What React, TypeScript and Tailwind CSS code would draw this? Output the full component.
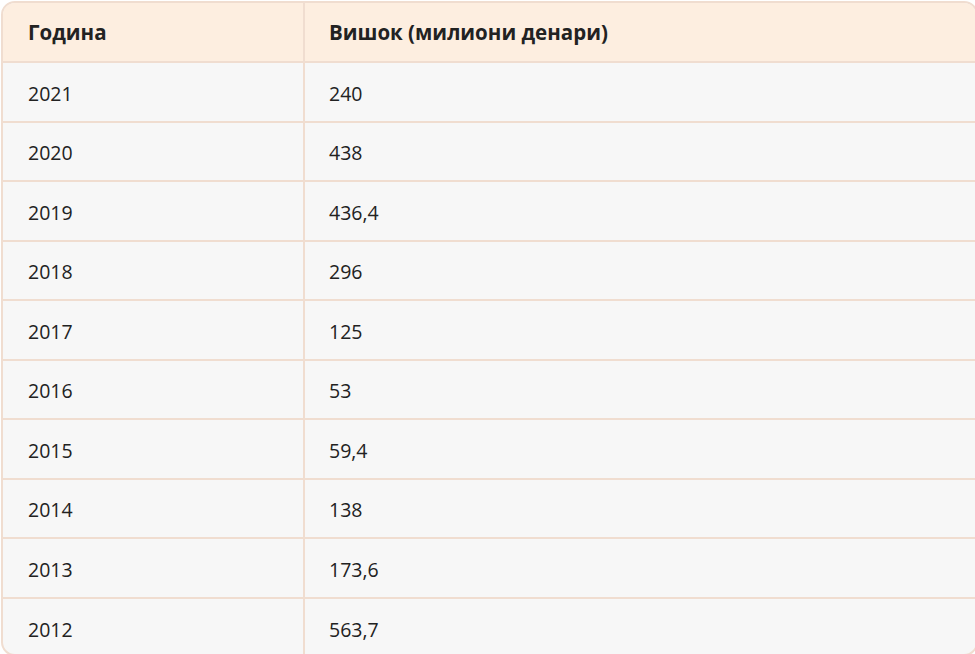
const rows: Array<[string, string]> = [
  ['2021', '240'],
  ['2020', '438'],
  ['2019', '436,4'],
  ['2018', '296'],
  ['2017', '125'],
  ['2016', '53'],
  ['2015', '59,4'],
  ['2014', '138'],
  ['2013', '173,6'],
  ['2012', '563,7'],
];

export default function App() {
  return (
    <div className="h-[654px] w-[975px] overflow-hidden bg-white pl-[1px] pt-[1px] font-['Open_Sans',sans-serif] text-[19.5px] text-[#222222]">
      <div className="h-[655px] w-[977px] overflow-hidden rounded-[14px] border-2 border-[#f0ddd0] bg-[#f7f7f7]">
        <div className="grid h-[60px] grid-cols-[302px_1fr] border-b-2 border-[#f0ddd0] bg-[#fdeee0] text-[20.5px] font-bold">
          <div className="flex items-center border-r-2 border-[#f0ddd0] pl-[25px]">Година</div>
          <div className="flex items-center pl-[24px]">Вишок (милиони денари)</div>
        </div>
        {rows.map(([year, value]) => (
          <div
            key={year}
            className="grid h-[59.5px] grid-cols-[302px_1fr] border-b-2 border-[#f0ddd0] last:border-b-0"
          >
            <div className="flex items-center border-r-2 border-[#f0ddd0] pl-[25px] pt-[3px]">{year}</div>
            <div className="flex items-center pl-[24px] pt-[3px]">{value}</div>
          </div>
        ))}
      </div>
    </div>
  );
}
